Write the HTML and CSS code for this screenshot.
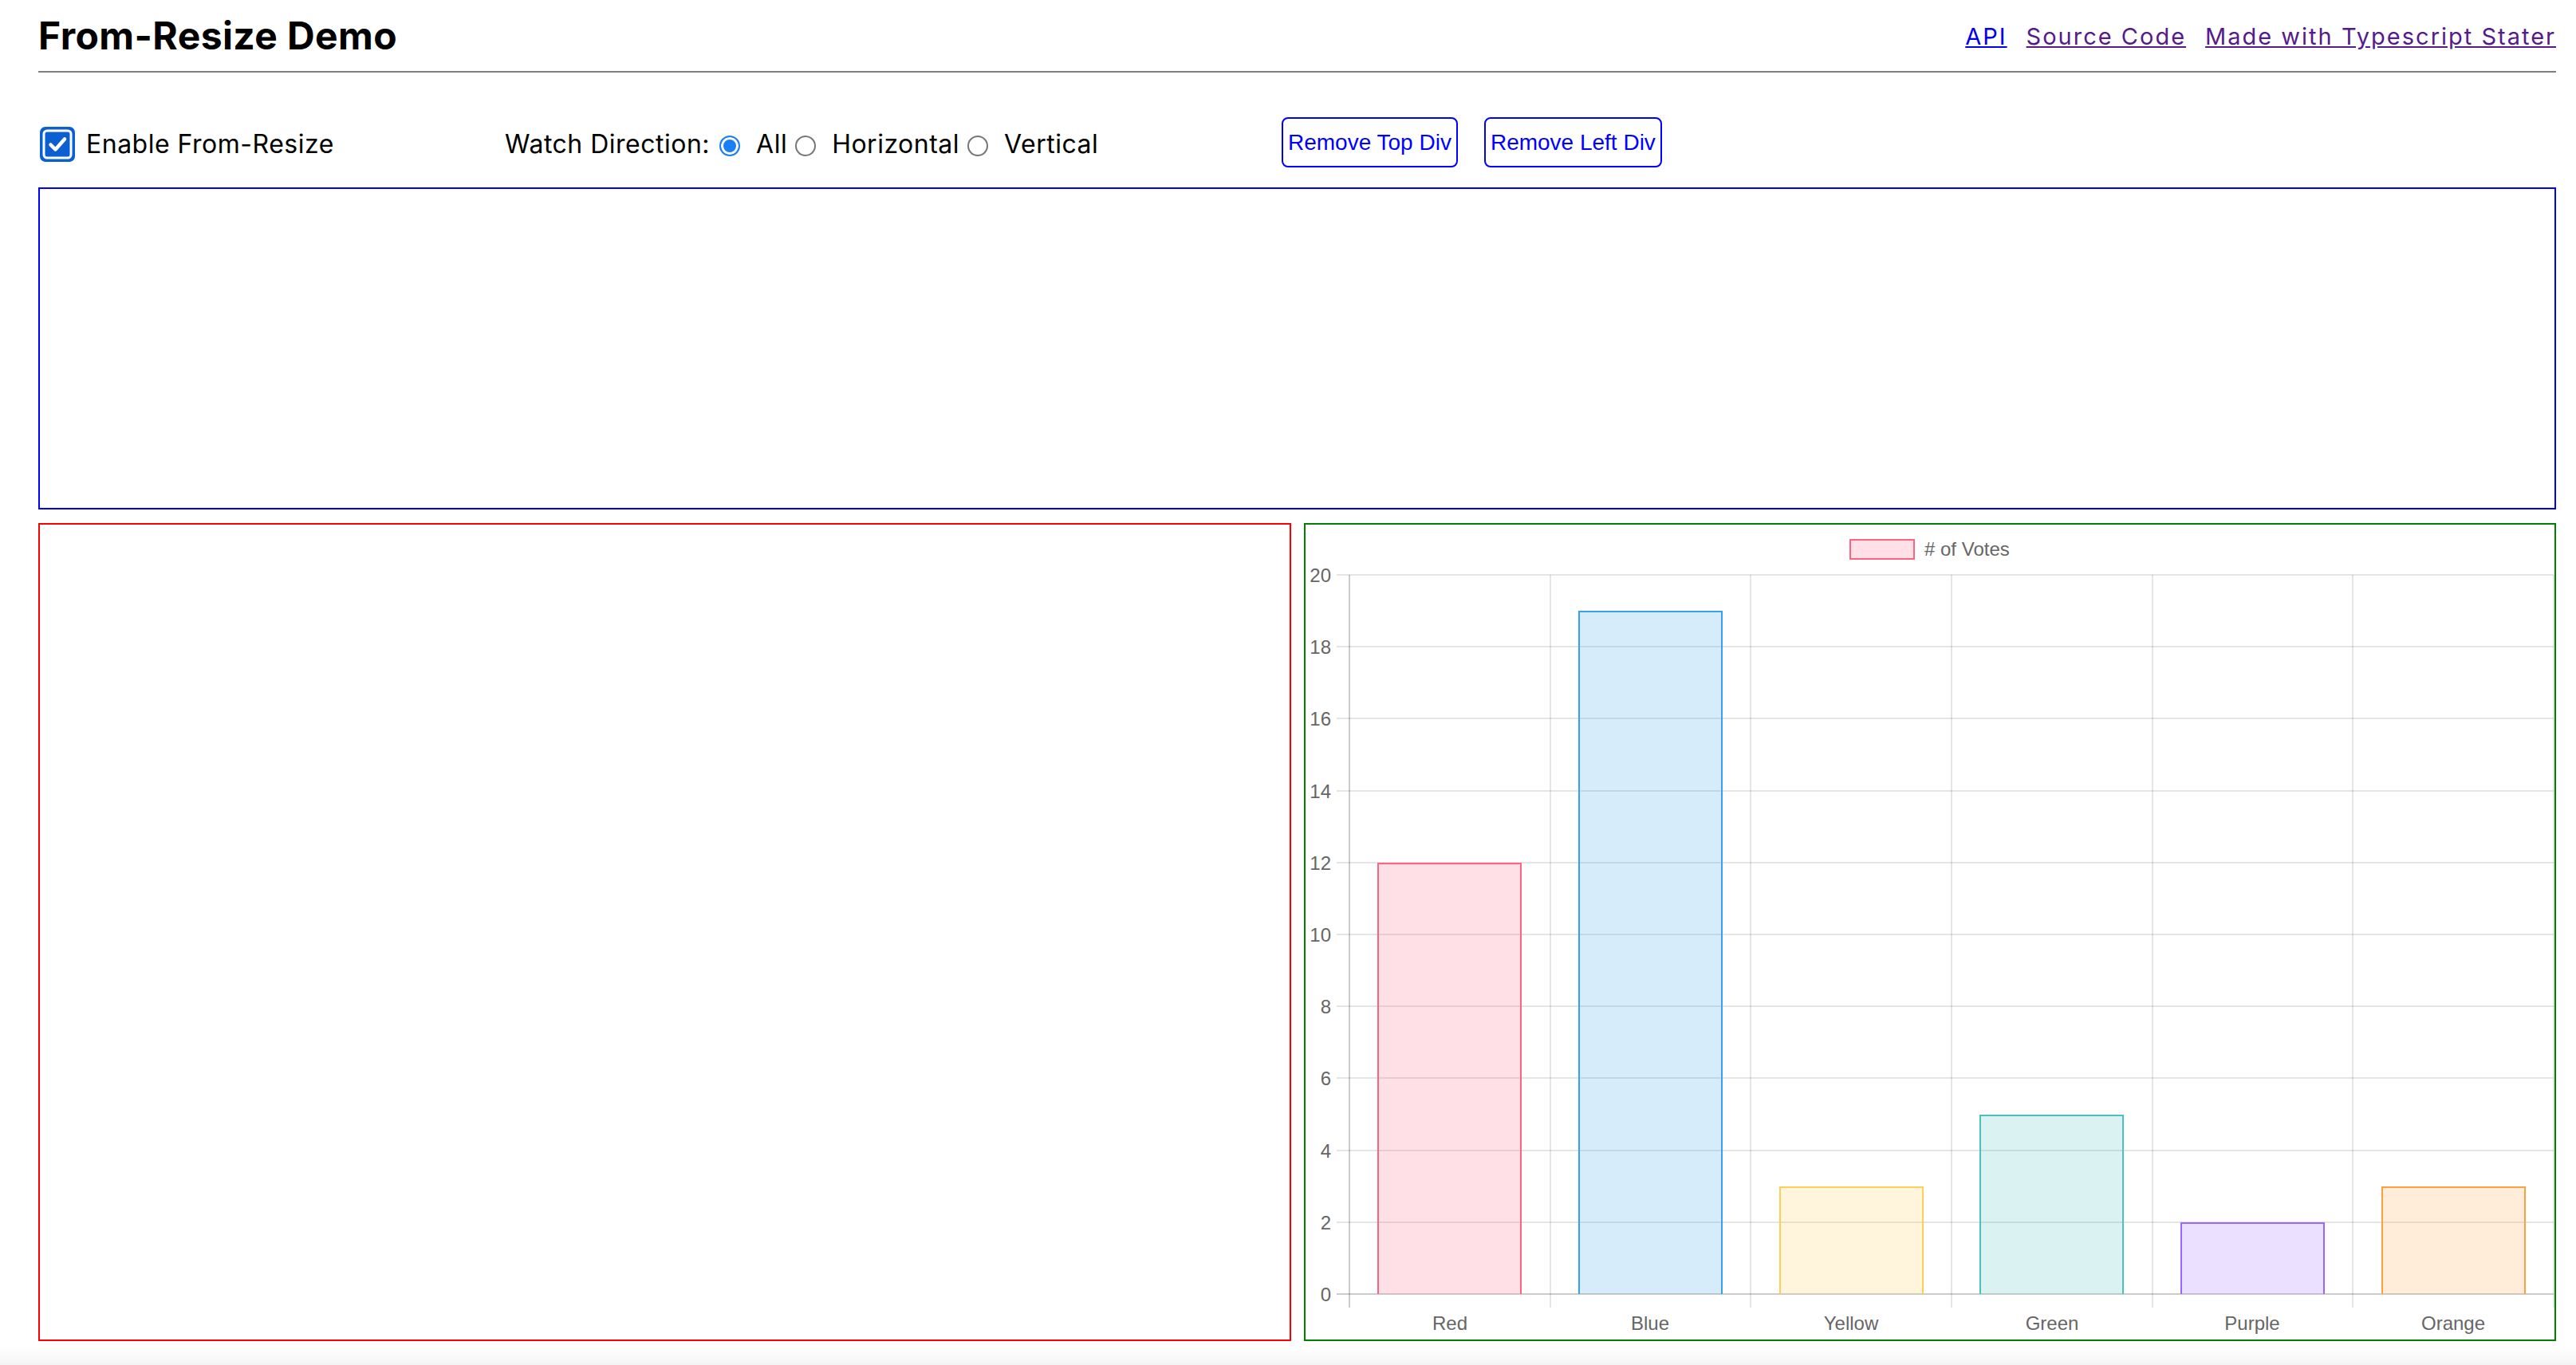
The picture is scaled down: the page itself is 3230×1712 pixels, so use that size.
FILE: index.html
```html
<!DOCTYPE html>
<html>
<head>
	<meta charset="utf-8">
	<title>From-Resize Demo</title>
	<link rel="stylesheet" href="styles.css">
</head>
<body>
<div class="page">
	<div class="header">
		<h1>From-Resize Demo</h1>
		<div class="links">
			<a class="api" href="#">API</a>
			<a class="visited" href="#">Source Code</a>
			<a class="visited" href="#">Made with Typescript Stater</a>
		</div>
	</div>

	<div class="controls">
		<label class="toggle">
			<svg class="check" width="44" height="44" viewBox="0 0 44 44">
				<rect x="0" y="0" width="44" height="44" rx="7" fill="#0b5fd0"/>
				<rect x="5" y="5" width="34" height="34" rx="4" fill="#0b5fd0" stroke="#fff" stroke-width="3"/>
				<path d="M13.5 22.5 L19.5 28.5 L31 15.5" fill="none" stroke="#fff" stroke-width="4.5" stroke-linecap="round" stroke-linejoin="round"/>
			</svg>
			<span>Enable From-Resize</span>
		</label>
		<div class="direction">
			<span>Watch Direction:</span>
			<input class="radio first" type="radio" name="dir" checked>
			<span class="opt">All</span>
			<input class="radio" type="radio" name="dir">
			<span class="opt">Horizontal</span>
			<input class="radio" type="radio" name="dir">
			<span class="opt">Vertical</span>
		</div>
		<div class="actions">
			<button>Remove Top Div</button>
			<button>Remove Left Div</button>
		</div>
	</div>

	<div class="top-box"></div>

	<div class="row">
		<div class="left-box"></div>
		<div class="chart-box">
			<svg class="chart" width="1566" height="1022" viewBox="0 0 1566 1022">
				<!-- legend -->
				<rect x="683" y="19" width="80" height="24" fill="rgba(255,99,132,0.2)" stroke="rgb(255,99,132)" stroke-width="2"/>
				<text class="lbl" x="776" y="39"># of Votes</text>

				<!-- horizontal grid -->
				<g stroke="rgba(0,0,0,0.1)" stroke-width="2">
					<line x1="39" y1="875" x2="1565" y2="875"/>
					<line x1="39" y1="785" x2="1565" y2="785"/>
					<line x1="39" y1="694" x2="1565" y2="694"/>
					<line x1="39" y1="604" x2="1565" y2="604"/>
					<line x1="39" y1="514" x2="1565" y2="514"/>
					<line x1="39" y1="424" x2="1565" y2="424"/>
					<line x1="39" y1="334" x2="1565" y2="334"/>
					<line x1="39" y1="243" x2="1565" y2="243"/>
					<line x1="39" y1="153" x2="1565" y2="153"/>
					<line x1="39" y1="63" x2="1565" y2="63"/>
					<line x1="307" y1="63" x2="307" y2="982"/>
					<line x1="558" y1="63" x2="558" y2="982"/>
					<line x1="810" y1="63" x2="810" y2="982"/>
					<line x1="1062" y1="63" x2="1062" y2="982"/>
					<line x1="1313" y1="63" x2="1313" y2="982"/>
					<line x1="1565" y1="63" x2="1565" y2="982"/>
				</g>
				<g stroke="rgba(0,0,0,0.2)" stroke-width="2">
					<line x1="39" y1="965" x2="1565" y2="965"/>
					<line x1="55" y1="63" x2="55" y2="982"/>
				</g>

				<!-- y labels -->
				<g class="lbl ylbl">
					<text x="32" y="965">0</text>
					<text x="32" y="875">2</text>
					<text x="32" y="785">4</text>
					<text x="32" y="694">6</text>
					<text x="32" y="604">8</text>
					<text x="32" y="514">10</text>
					<text x="32" y="424">12</text>
					<text x="32" y="334">14</text>
					<text x="32" y="243">16</text>
					<text x="32" y="153">18</text>
					<text x="32" y="63">20</text>
				</g>

				<!-- bars -->
				<rect x="90" y="424" width="181" height="541" fill="rgba(255,99,132,0.2)"/>
				<path d="M91 965 V425 H270 V965" fill="none" stroke="rgb(255,99,132)" stroke-width="2"/>
				<rect x="342" y="108" width="181" height="857" fill="rgba(54,162,235,0.2)"/>
				<path d="M343 965 V109 H522 V965" fill="none" stroke="rgb(54,162,235)" stroke-width="2"/>
				<rect x="594" y="830" width="181" height="135" fill="rgba(255,206,86,0.2)"/>
				<path d="M595 965 V831 H774 V965" fill="none" stroke="rgb(255,206,86)" stroke-width="2"/>
				<rect x="845" y="740" width="181" height="225" fill="rgba(75,192,192,0.2)"/>
				<path d="M846 965 V741 H1025 V965" fill="none" stroke="rgb(75,192,192)" stroke-width="2"/>
				<rect x="1097" y="875" width="181" height="90" fill="rgba(153,102,255,0.2)"/>
				<path d="M1098 965 V876 H1277 V965" fill="none" stroke="rgb(153,102,255)" stroke-width="2"/>
				<rect x="1349" y="830" width="181" height="135" fill="rgba(255,159,64,0.2)"/>
				<path d="M1350 965 V831 H1529 V965" fill="none" stroke="rgb(255,159,64)" stroke-width="2"/>

				<!-- x labels -->
				<g class="lbl xlbl">
					<text x="181" y="1010">Red</text>
					<text x="432" y="1010">Blue</text>
					<text x="684" y="1010">Yellow</text>
					<text x="936" y="1010">Green</text>
					<text x="1187" y="1010">Purple</text>
					<text x="1439" y="1010">Orange</text>
				</g>
			</svg>
		</div>
	</div>
</div>
</body>
</html>
```
FILE: styles.css
```css
html{
	background: linear-gradient(to bottom, #fff 1690px, #f4f4f4 1712px);
	min-height: 100%;
}
body{
	margin: 0;
	font-family: "Inter", "Open Sans", sans-serif;
	color: #000;
}
.page{
	padding: 0 25px 0 48px;
}
.header{
	display: flex;
	justify-content: space-between;
	align-items: flex-start;
	padding: 21px 0 20px;
	border-bottom: 2px solid #808080;
}
.header h1{
	margin: 0;
	font-size: 48px;
	line-height: 1;
	font-weight: 700;
	letter-spacing: 0.4px;
}
.links{
	margin-top: 10px;
	display: flex;
	gap: 24px;
	font-size: 29px;
	line-height: 1;
	letter-spacing: 2px;
}
.links a{
	text-decoration: underline;
}
.links .api{
	color: #0000ee;
}
.links .visited{
	color: #551a8b;
}
.controls{
	margin-top: 56px;
	display: flex;
	align-items: center;
	height: 63px;
	font-size: 32px;
	letter-spacing: 0.5px;
}
.toggle{
	width: 585px;
	padding-top: 4px;
	display: flex;
	align-items: center;
}
.check{
	display: block;
	margin-left: 2px;
	margin-right: 14px;
}
.direction{
	width: 974px;
	padding-top: 4px;
	display: flex;
	align-items: center;
}
.radio{
	appearance: none;
	-webkit-appearance: none;
	width: 26px;
	height: 26px;
	margin: 4px 0 0 10px;
	border: 2px solid #767676;
	border-radius: 50%;
	background: #fff;
	box-sizing: border-box;
}
.radio.first{
	margin-left: 12px;
}
.radio:checked{
	border-color: #1a7ff5;
	background: #1a7ff5;
	box-shadow: inset 0 0 0 3px #fff;
}
.opt{
	margin-left: 20px;
}
.actions{
	display: flex;
	gap: 33px;
}
.actions button{
	height: 63px;
	padding: 0 6px;
	border: 2px solid #0000ff;
	border-radius: 8px;
	background: #fff;
	color: #0000ff;
	font-family: "Liberation Sans", Arial, sans-serif;
	font-size: 28px;
	letter-spacing: 0;
}
.top-box{
	margin-top: 25px;
	height: 400px;
	border: 2px solid #0000ff;
}
.row{
	margin-top: 17px;
	display: flex;
	gap: 16px;
}
.left-box, .chart-box{
	flex: 1;
	height: 1022px;
}
.left-box{
	border: 2px solid #ff0000;
}
.chart-box{
	border: 2px solid #008000;
}
.chart{
	display: block;
}
.lbl{
	font-family: "Liberation Sans", Arial, sans-serif;
	font-size: 24px;
	fill: #666;
}
.ylbl text{
	text-anchor: end;
	dominant-baseline: central;
}
.xlbl text{
	text-anchor: middle;
}
```
